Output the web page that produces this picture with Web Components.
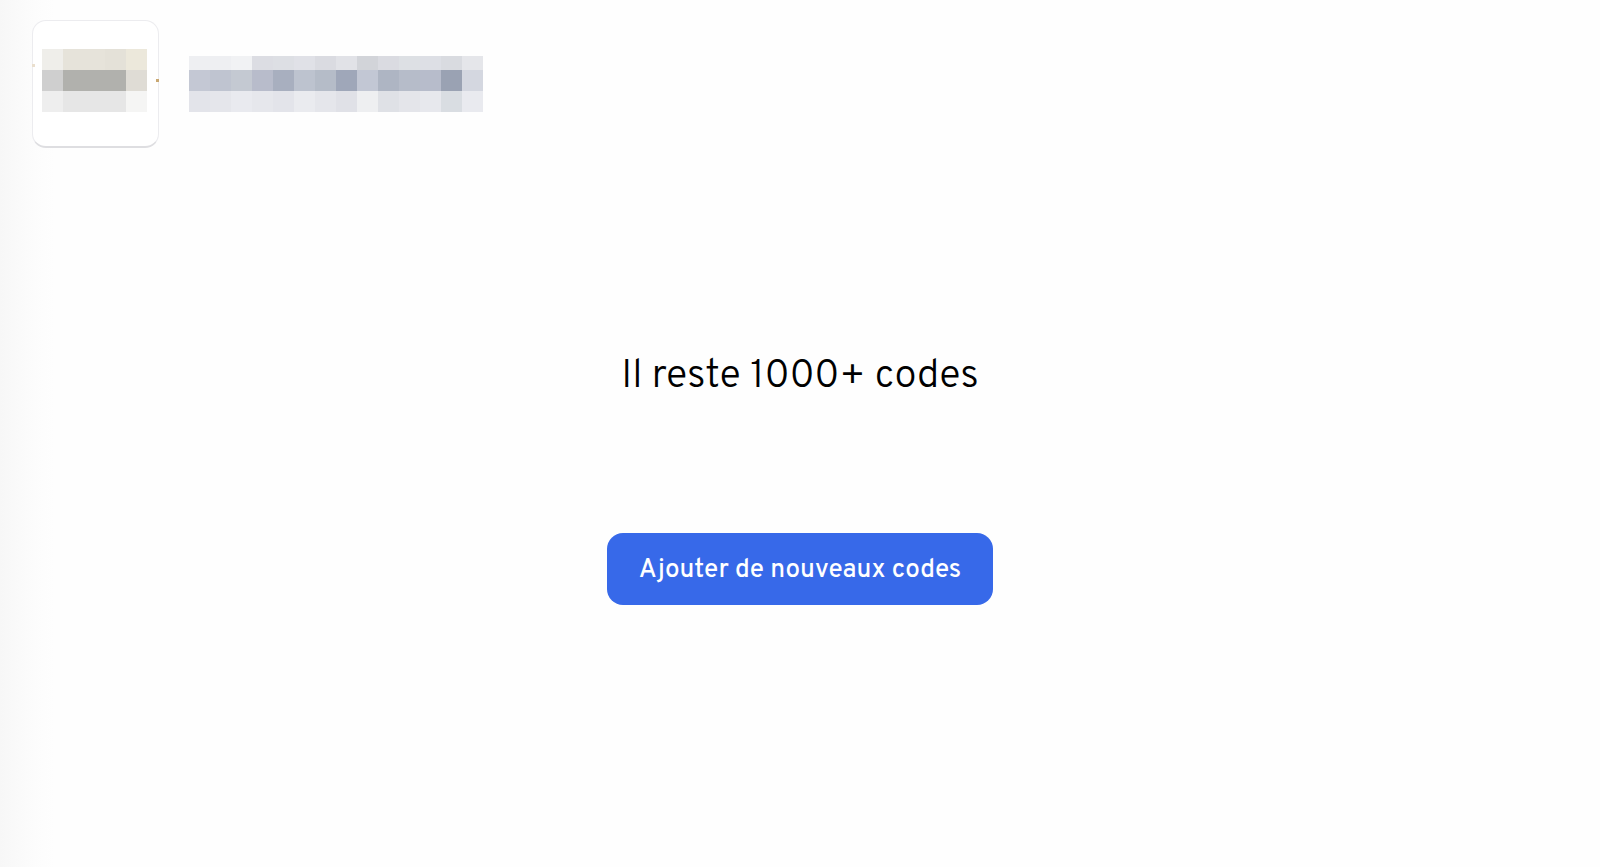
<!DOCTYPE html>
<html lang="fr">
<head>
<meta charset="utf-8">
<title>Codes</title>
<style>
  body { margin: 0; background: #fefefe; color: #000; font-family: Overpass, Roboto, sans-serif; }
</style>
</head>
<body>
<codes-page>
  <page-header slot="header">
    <logo-card>
      <pixel-mosaic cell="21" rows="efeeea e6e3da e6e3da e4e1d8 ece8db|cfcfcf b1b1ad b1b1ad b1b1ad dfdcd5|eeeeee e6e6e6 e6e6e6 e6e6e6 f5f5f4"></pixel-mosaic>
    </logo-card>
    <pixel-mosaic cell="21" first="14" rows="eeeff2 eeeff2 f1f2f4 dcdde3 dddfe4 e0e1e7 dadbe1 e1e2e7 d2d4d9 dadbe1 dde0e4 dddfe5 d9dbe0 e5e6ea|c4c8d4 bfc4d0 c4c9d2 b8bccb a8afbf bdc3cf b5bcc8 9fa7b9 c2c7d4 aeb5c3 b6bcc9 b7bccb 9aa2b3 d4d7e0|e3e4ea e5e6eb e9eaef e6e7ec e3e4ea eaebef e5e6eb e0e1e7 eeeff1 dfe1e6 e4e5ea e7e8ed d9dde2 e9eaef"></pixel-mosaic>
  </page-header>
  <codes-status>
    <span slot="title">Il reste 1000+ codes</span>
    <action-button slot="action">Ajouter de nouveaux codes</action-button>
  </codes-status>
</codes-page>

<script>
  const define = (name, html, setup) => customElements.define(name, class extends HTMLElement {
    constructor() {
      super();
      this.attachShadow({ mode: "open" }).innerHTML = html;
    }
    connectedCallback() { if (setup) setup(this, this.shadowRoot); }
  });

  define("codes-page", `
    <style>
      :host { display: flex; flex-direction: column; box-sizing: border-box; min-height: 100vh;
        background: linear-gradient(90deg, #f7f7f7, #fafafa 20px, #fcfcfc 34px, #fefefe 54px); }
    </style>
    <slot name="header"></slot>
    <slot></slot>`);

  define("page-header", `
    <style>
      :host { display: flex; align-items: center; gap: 30px; padding: 20px 32px; }
    </style>
    <slot></slot>`);

  define("logo-card", `
    <style>
      :host { display: flex; flex: none; position: relative; box-sizing: border-box;
        width: 127px; height: 128px; padding: 28px 0 0 9px; border: 1px solid #ececef; border-bottom: 2px solid #dedee1;
        border-radius: 14px; background: #fff; }
      i { position: absolute; width: 3px; height: 3px; }
      .left { left: -1px; top: 43px; background: #eadfce; }
      .right { right: -1px; top: 58px; background: #c9a872; }
    </style>
    <slot></slot><i class="left"></i><i class="right"></i>`);

  define("pixel-mosaic", `
    <style>
      :host { display: block; flex: none; }
      svg { display: block; }
    </style>
    <svg aria-hidden="true" shape-rendering="crispEdges"></svg>`, (host, root) => {
      const cell = +host.getAttribute("cell");
      const first = +(host.getAttribute("first") || cell);
      const rows = host.getAttribute("rows").split("|").map(r => r.split(" "));
      const svg = root.querySelector("svg");
      let y = 0, out = "";
      rows.forEach((row, r) => {
        const h = r ? cell : first;
        row.forEach((c, i) => out += `<rect x="${i * cell}" y="${y}" width="${cell}" height="${h}" fill="#${c}"/>`);
        y += h;
      });
      svg.setAttribute("width", rows[0].length * cell);
      svg.setAttribute("height", y);
      svg.innerHTML = out;
    });

  define("codes-status", `
    <style>
      :host { display: flex; flex-direction: column; align-items: center; gap: 132px;
        padding: 185px 32px 32px; }
      h1 { margin: 0; font-size: 40px; line-height: 48px; font-weight: 300; }
    </style>
    <h1><slot name="title"></slot></h1>
    <slot name="action"></slot>`);

  define("action-button", `
    <style>
      :host { display: block; }
      button { display: block; border: 0; border-radius: 16px; padding: 22px 32px 18px; background: #3769e9; color: #fff;
        font-family: inherit; font-size: 26px; line-height: 32px; font-weight: 500; cursor: pointer; }
    </style>
    <button type="button"><slot></slot></button>`);
</script>
</body>
</html>
